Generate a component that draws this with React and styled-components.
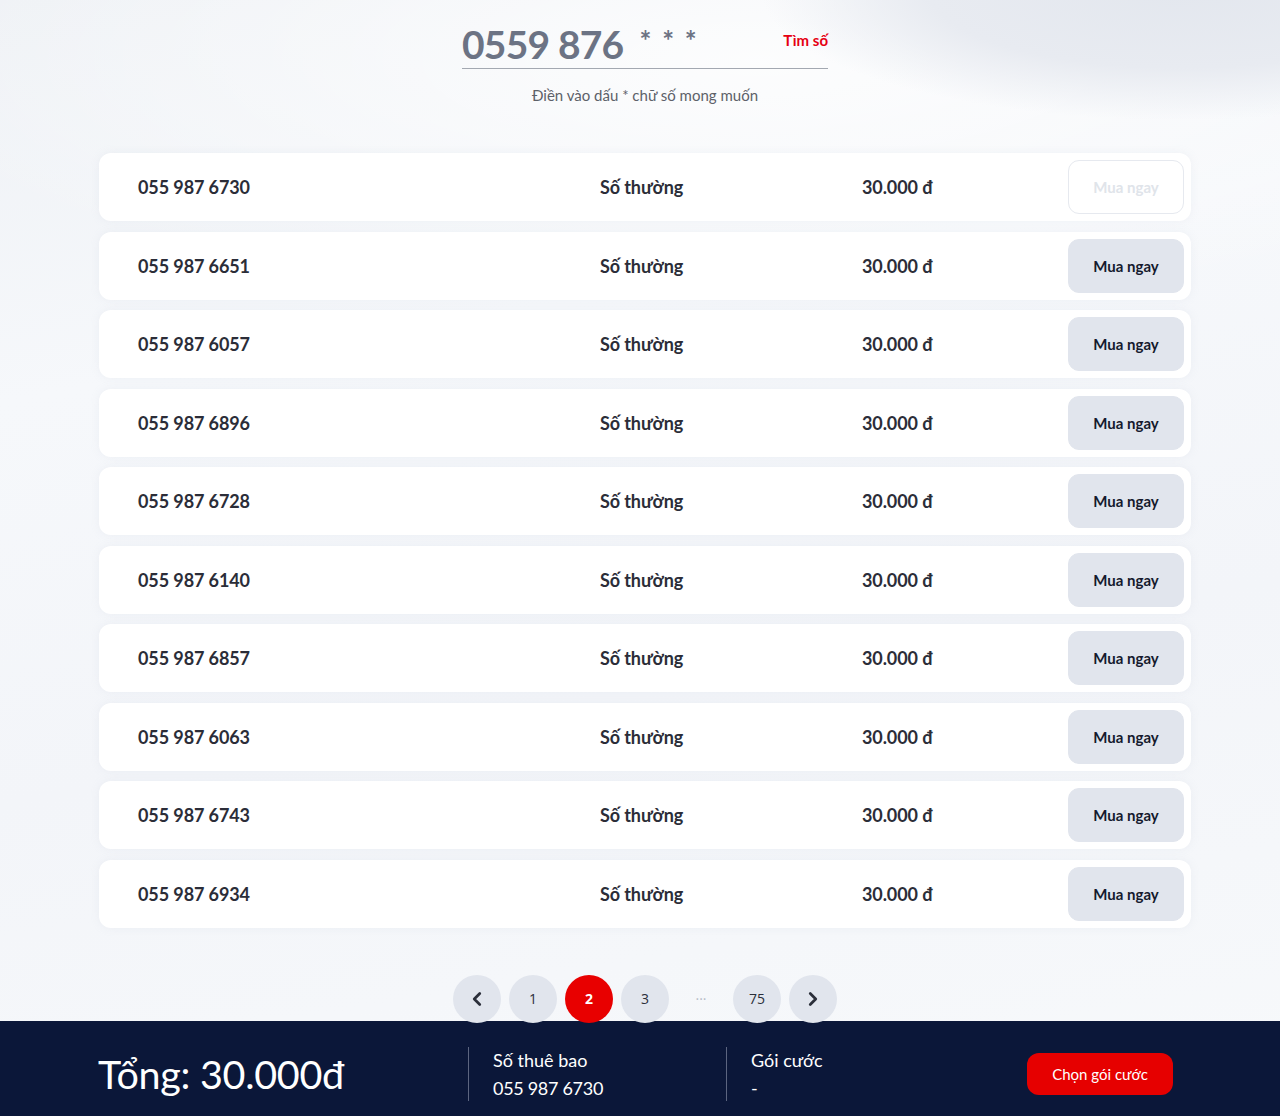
import React, { useState } from "react";
import styled, { createGlobalStyle } from "styled-components";
import { FiChevronLeft, FiChevronRight } from "react-icons/fi";

const GlobalStyle = createGlobalStyle`
  * {
    box-sizing: border-box;
  }
  body {
    margin: 0;
    font-family: Lato, "Noto Sans", "Liberation Sans", sans-serif;
    background: #f4f6f9;
  }
`;

const Page = styled.div`
  width: 1280px;
  min-height: 1116px;
  display: flex;
  flex-direction: column;
  background:
    radial-gradient(ellipse 420px 130px at 1180px -10px, #e3e7ee 0%, #e8ebf1 60%, rgba(232, 235, 241, 0) 100%),
    radial-gradient(ellipse 900px 260px at 760px 60px, rgba(255, 255, 255, 0.8) 0%, rgba(255, 255, 255, 0) 100%),
    linear-gradient(170deg, #eef1f5 0%, #f6f8fb 30%, #f3f5f9 60%, #f7f9fb 100%);
`;

const Main = styled.main`
  flex: 1;
  padding: 22px 89px 0 99px;
  display: flex;
  flex-direction: column;
  align-items: center;
  position: relative;
  z-index: 1;
`;

const Search = styled.div`
  width: 366px;
  display: flex;
  flex-direction: column;
  align-items: center;
`;

const SearchBar = styled.div`
  width: 100%;
  height: 47px;
  display: flex;
  align-items: flex-start;
  border-bottom: 1px solid #a3a8b1;
`;

const Prefix = styled.span`
  font-size: 39px;
  font-weight: 700;
  color: #6c7384;
  line-height: 44px;
  letter-spacing: -0.8px;
`;

const Stars = styled.span`
  margin-left: 16px;
  margin-top: 3px;
  font-size: 28px;
  font-weight: 700;
  color: #6c7384;
  line-height: 30px;
  letter-spacing: 2px;
`;

const FindButton = styled.button`
  margin-left: auto;
  margin-top: 9px;
  padding: 0;
  border: none;
  background: none;
  font-family: inherit;
  font-size: 15px;
  font-weight: 700;
  color: #e60012;
  cursor: pointer;
`;

const Hint = styled.p`
  margin: 17px 0 0;
  font-size: 15px;
  color: #5d6169;
`;

const List = styled.div`
  width: 1092px;
  margin-top: 49px;
  display: flex;
  flex-direction: column;
  gap: 10.5px;
`;

const Row = styled.div`
  height: 68px;
  padding: 0 7px 0 39px;
  display: grid;
  grid-template-columns: 462px 262px 1fr 116px;
  align-items: center;
  background: #ffffff;
  border-radius: 12px;
  box-shadow: 0 0 10px rgba(170, 180, 200, 0.12);
  color: #2b2d38;
  font-size: 18px;
  font-weight: 700;
`;

const Cell = styled.span`
  letter-spacing: -0.1px;
`;

const BuyButton = styled.button`
  height: 54px;
  border-radius: 11px;
  font-family: inherit;
  font-size: 15px;
  font-weight: 700;
  cursor: pointer;
  border: 1px solid ${(p) => (p.$disabled ? "#e6e9ef" : "#e1e5ed")};
  background: ${(p) => (p.$disabled ? "#ffffff" : "#e1e5ed")};
  color: ${(p) => (p.$disabled ? "#e0e4ea" : "#151a2e")};
`;

const Pagination = styled.nav`
  margin-top: 47px;
  margin-bottom: -2px;
  display: flex;
  gap: 8px;
`;

const PageDot = styled.button`
  width: 48px;
  height: 48px;
  border-radius: 50%;
  border: none;
  display: flex;
  align-items: center;
  justify-content: center;
  font-family: "Open Sans", sans-serif;
  font-size: 14px;
  font-weight: ${(p) => (p.$active ? 700 : 400)};
  background: ${(p) => (p.$active ? "#e80000" : p.$plain ? "transparent" : "#e1e5ed")};
  color: ${(p) => (p.$active ? "#ffffff" : p.$plain ? "#b6bcc7" : "#2b2f3a")};
  cursor: pointer;

  svg {
    font-size: 22px;
    stroke-width: 3;
  }
`;

const Footer = styled.footer`
  height: 95px;
  background: #0b1739;
  display: flex;
  align-items: center;
  padding: 10px 107px 0 98px;
  color: #ffffff;
`;

const Total = styled.div`
  width: 370px;
  font-size: 39.5px;
  font-weight: 400;
  letter-spacing: -0.3px;
`;

const Info = styled.div`
  width: 258px;
  height: 54px;
  padding-left: 24px;
  border-left: 1px solid #5c6580;
  display: flex;
  flex-direction: column;
  justify-content: center;
  gap: 8px;
  font-size: 18px;
  line-height: 20px;
`;

const InfoValue = styled.span`
  font-size: 18px;
  letter-spacing: -0.3px;
`;

const PlanButton = styled.button`
  margin-left: auto;
  width: 146px;
  height: 42px;
  border: none;
  border-radius: 12px;
  background: #e60000;
  color: #ffffff;
  font-family: inherit;
  font-size: 15px;
  cursor: pointer;
`;

const numbers = [
  "055 987 6730",
  "055 987 6651",
  "055 987 6057",
  "055 987 6896",
  "055 987 6728",
  "055 987 6140",
  "055 987 6857",
  "055 987 6063",
  "055 987 6743",
  "055 987 6934",
];

const App = () => {
  const [page, setPage] = useState(2);
  const [selected] = useState(numbers[0]);

  return (
    <Page>
      <GlobalStyle />
      <Main>
        <Search>
          <SearchBar>
            <Prefix>0559 876</Prefix>
            <Stars>* * *</Stars>
            <FindButton>Tìm số</FindButton>
          </SearchBar>
          <Hint>Điền vào dấu * chữ số mong muốn</Hint>
        </Search>

        <List>
          {numbers.map((num) => (
            <Row key={num}>
              <Cell>{num}</Cell>
              <Cell>Số thường</Cell>
              <Cell>30.000 đ</Cell>
              <BuyButton $disabled={num === selected}>Mua ngay</BuyButton>
            </Row>
          ))}
        </List>

        <Pagination>
          <PageDot onClick={() => setPage(Math.max(1, page - 1))}>
            <FiChevronLeft />
          </PageDot>
          {[1, 2, 3].map((n) => (
            <PageDot key={n} $active={n === page} onClick={() => setPage(n)}>
              {n}
            </PageDot>
          ))}
          <PageDot $plain>···</PageDot>
          <PageDot $active={page === 75} onClick={() => setPage(75)}>
            75
          </PageDot>
          <PageDot onClick={() => setPage(Math.min(75, page + 1))}>
            <FiChevronRight />
          </PageDot>
        </Pagination>
      </Main>

      <Footer>
        <Total>Tổng: 30.000đ</Total>
        <Info>
          <span>Số thuê bao</span>
          <InfoValue>{selected}</InfoValue>
        </Info>
        <Info>
          <span>Gói cước</span>
          <InfoValue>-</InfoValue>
        </Info>
        <PlanButton>Chọn gói cước</PlanButton>
      </Footer>
    </Page>
  );
};

export default App;
